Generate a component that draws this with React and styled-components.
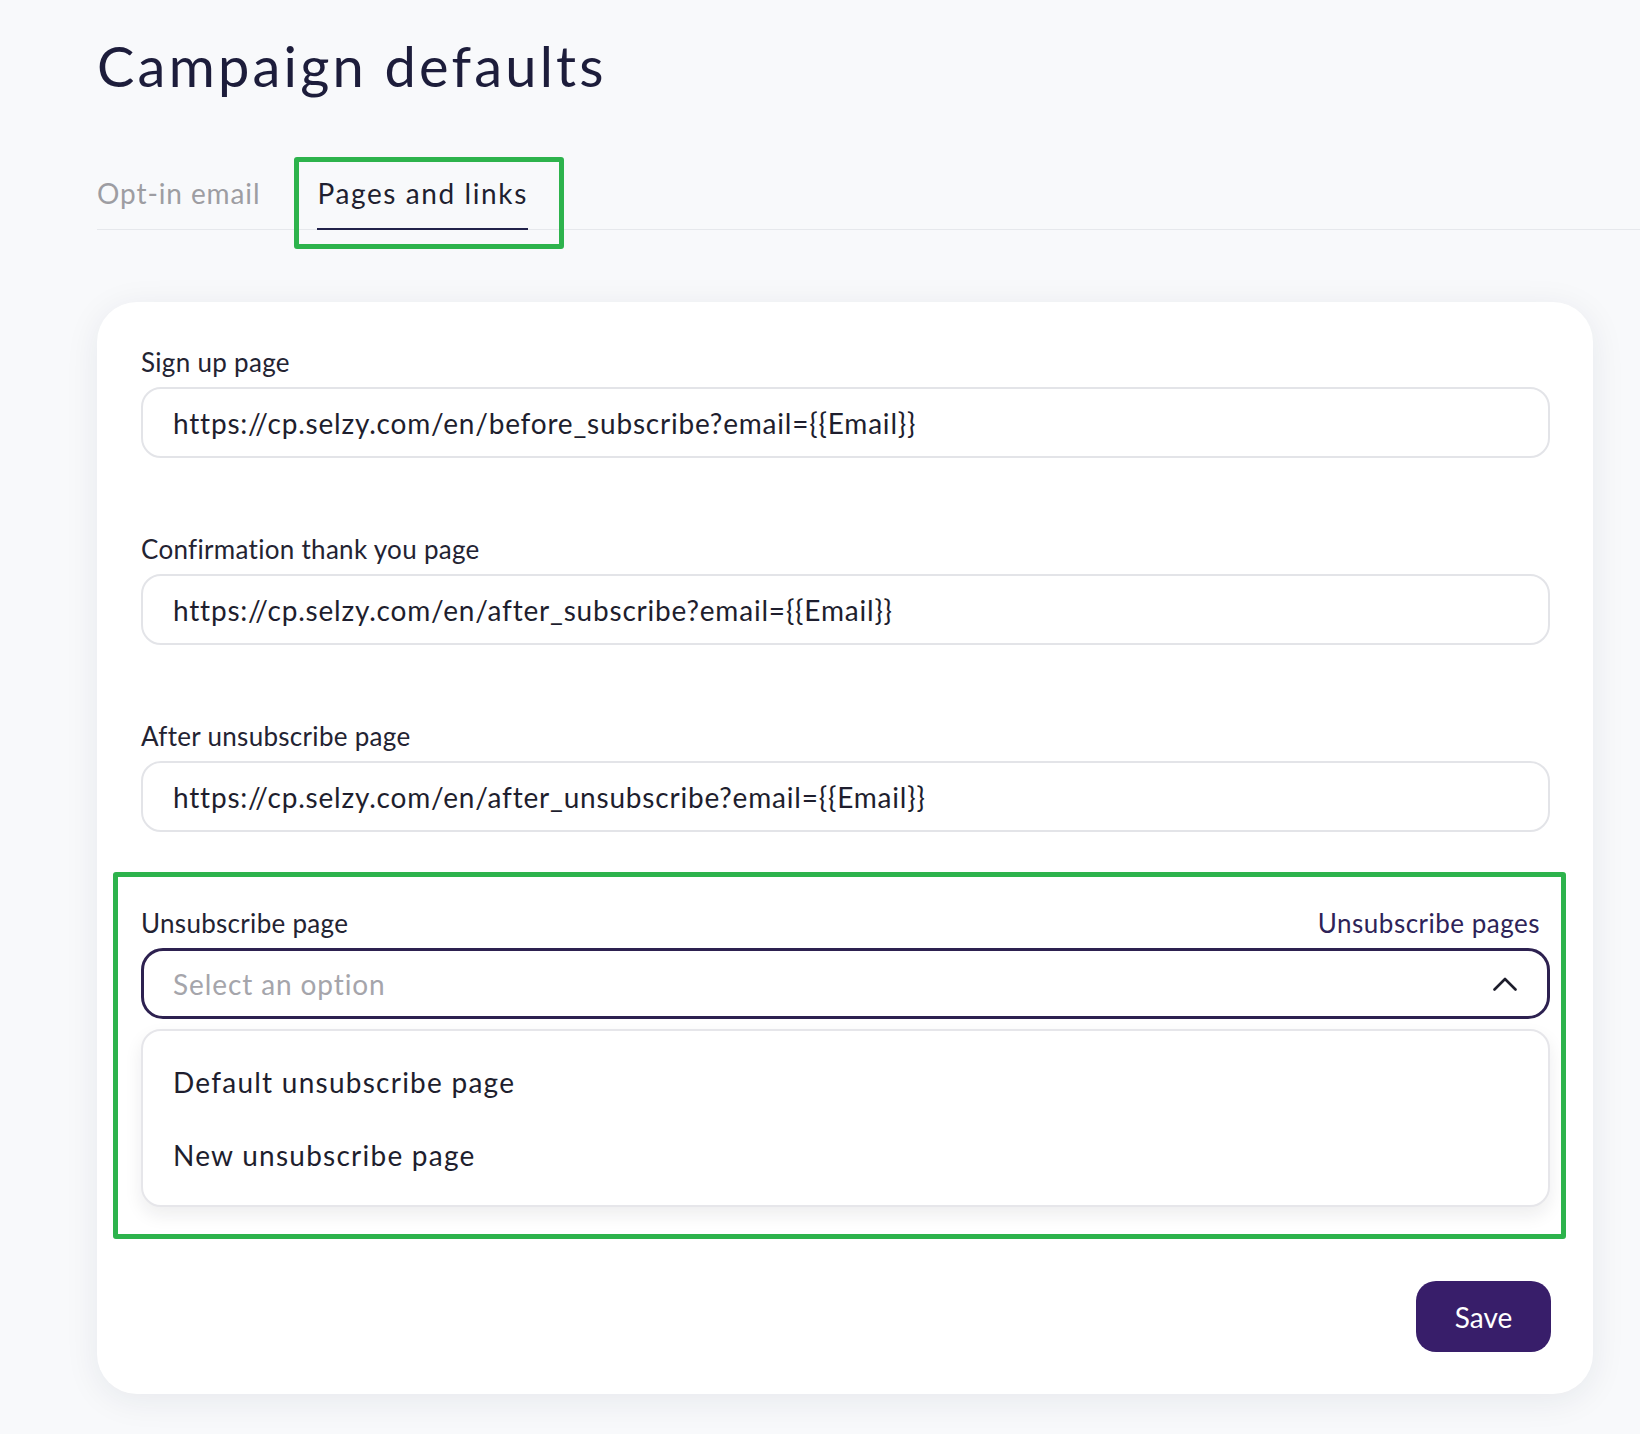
import React from "react";
import styled, { createGlobalStyle } from "styled-components";

const Global = createGlobalStyle`
  html, body { margin: 0; padding: 0; background: #f8f9fb; }
  body { font-family: Lato, "Noto Sans", sans-serif; color: #1f1f30; }
  * { box-sizing: border-box; }
`;

const Page = styled.div`
  padding: 32px 47px 40px 97px;
  min-height: 1434px;
`;

const Title = styled.h1`
  margin: 0;
  font-size: 56px;
  line-height: 67px;
  font-weight: 400;
  letter-spacing: 3.2px;
  color: #1d1d3b;
`;

const TabList = styled.div`
  display: flex;
  gap: 57px;
  margin: 77px -47px 0 0;
  border-bottom: 1px solid #e6e8ec;
`;

const Tab = styled.div`
  position: relative;
  font-size: 28px;
  line-height: 34px;
  letter-spacing: ${(p) => (p.$active ? 1.6 : 0.9)}px;
  padding-bottom: 18px;
  color: ${(p) => (p.$active ? "#1f1f30" : "#9d9da2")};
  border-bottom: 2px solid ${(p) => (p.$active ? "#22224a" : "transparent")};
  margin-bottom: -1px;
  ${(p) =>
    p.$highlight &&
    `
    &::after {
      content: "";
      position: absolute;
      top: -19px;
      bottom: -21px;
      left: -23px;
      right: -36px;
      border: 5px solid #2db34c;
      border-radius: 3px;
    }
  `}
`;

const Card = styled.div`
  margin-top: 72px;
  background: #fff;
  border-radius: 40px;
  box-shadow: 0 6px 34px rgba(30, 40, 70, 0.08);
  padding: 44px 43px 42px 44px;
  display: flex;
  flex-direction: column;
`;

const Field = styled.div`
  position: relative;
  display: flex;
  flex-direction: column;
  margin-bottom: ${(p) => p.$mb ?? 75}px;
  ${(p) =>
    p.$highlight &&
    `
    &::after {
      content: "";
      position: absolute;
      top: -35px;
      bottom: -32px;
      left: -28px;
      right: -16px;
      border: 5px solid #2db34c;
      border-radius: 3px;
      pointer-events: none;
    }
  `}
`;

const LabelRow = styled.div`
  display: flex;
  justify-content: space-between;
  align-items: baseline;
  margin-bottom: 9px;
`;

const Label = styled.label`
  font-size: 26px;
  line-height: 32px;
  letter-spacing: 0.3px;
  color: #232332;
`;

const Link = styled.a`
  font-size: 26px;
  line-height: 32px;
  letter-spacing: 0.5px;
  color: #2e2358;
  text-decoration: none;
  margin-right: 10px;
`;

const Input = styled.div`
  height: 71px;
  border: 2px solid #e3e4e8;
  border-radius: 20px;
  padding: 0 30px;
  display: flex;
  align-items: center;
  font-size: 28px;
  letter-spacing: 0.8px;
  color: #1e1e2e;
  background: #fff;
`;

const Select = styled.div`
  height: 71px;
  border: 3px solid #2d2150;
  border-radius: 22px;
  padding: 0 30px 0 29px;
  display: flex;
  align-items: center;
  justify-content: space-between;
  font-size: 28px;
  letter-spacing: 0.9px;
  color: #a5a5ab;
`;

const Menu = styled.div`
  margin-top: 10px;
  border: 2px solid #e6e6ea;
  border-radius: 20px;
  padding: 14px 0;
  background: #fff;
  box-shadow: 0 8px 18px rgba(20, 20, 40, 0.08);
`;

const Option = styled.div`
  height: 73px;
  display: flex;
  align-items: center;
  padding: 0 30px;
  font-size: 28px;
  letter-spacing: 1.25px;
  color: #1e1e2e;
`;

const Footer = styled.div`
  display: flex;
  justify-content: flex-end;
`;

const SaveButton = styled.button`
  height: 71px;
  width: 135px;
  margin-right: -1px;
  border: none;
  border-radius: 20px;
  background: #381e6a;
  color: #fff;
  font-family: Lato, "Noto Sans", sans-serif;
  font-size: 28px;
  cursor: pointer;
`;

const Chevron = () => (
  <svg width="24" height="14" viewBox="0 0 24 14" fill="none">
    <polyline points="1.5,12.5 12,2 22.5,12.5" stroke="#1d1d2b" strokeWidth="2.6" strokeLinecap="round" strokeLinejoin="round" />
  </svg>
);

const fields = [
  { label: "Sign up page", value: "https://cp.selzy.com/en/before_subscribe?email={{Email}}" },
  { label: "Confirmation thank you page", value: "https://cp.selzy.com/en/after_subscribe?email={{Email}}" },
  { label: "After unsubscribe page", value: "https://cp.selzy.com/en/after_unsubscribe?email={{Email}}" },
];

export default function App() {
  return (
    <>
      <Global />
      <Page>
        <Title>Campaign defaults</Title>
        <TabList>
          <Tab>Opt-in email</Tab>
          <Tab $active $highlight>Pages and links</Tab>
        </TabList>
        <Card>
          {fields.map((f) => (
            <Field key={f.label}>
              <LabelRow>
                <Label>{f.label}</Label>
              </LabelRow>
              <Input>{f.value}</Input>
            </Field>
          ))}
          <Field $highlight $mb={74}>
            <LabelRow>
              <Label>Unsubscribe page</Label>
              <Link href="#">Unsubscribe pages</Link>
            </LabelRow>
            <Select>
              <span>Select an option</span>
              <Chevron />
            </Select>
            <Menu>
              <Option>Default unsubscribe page</Option>
              <Option>New unsubscribe page</Option>
            </Menu>
          </Field>
          <Footer>
            <SaveButton>Save</SaveButton>
          </Footer>
        </Card>
      </Page>
    </>
  );
}
